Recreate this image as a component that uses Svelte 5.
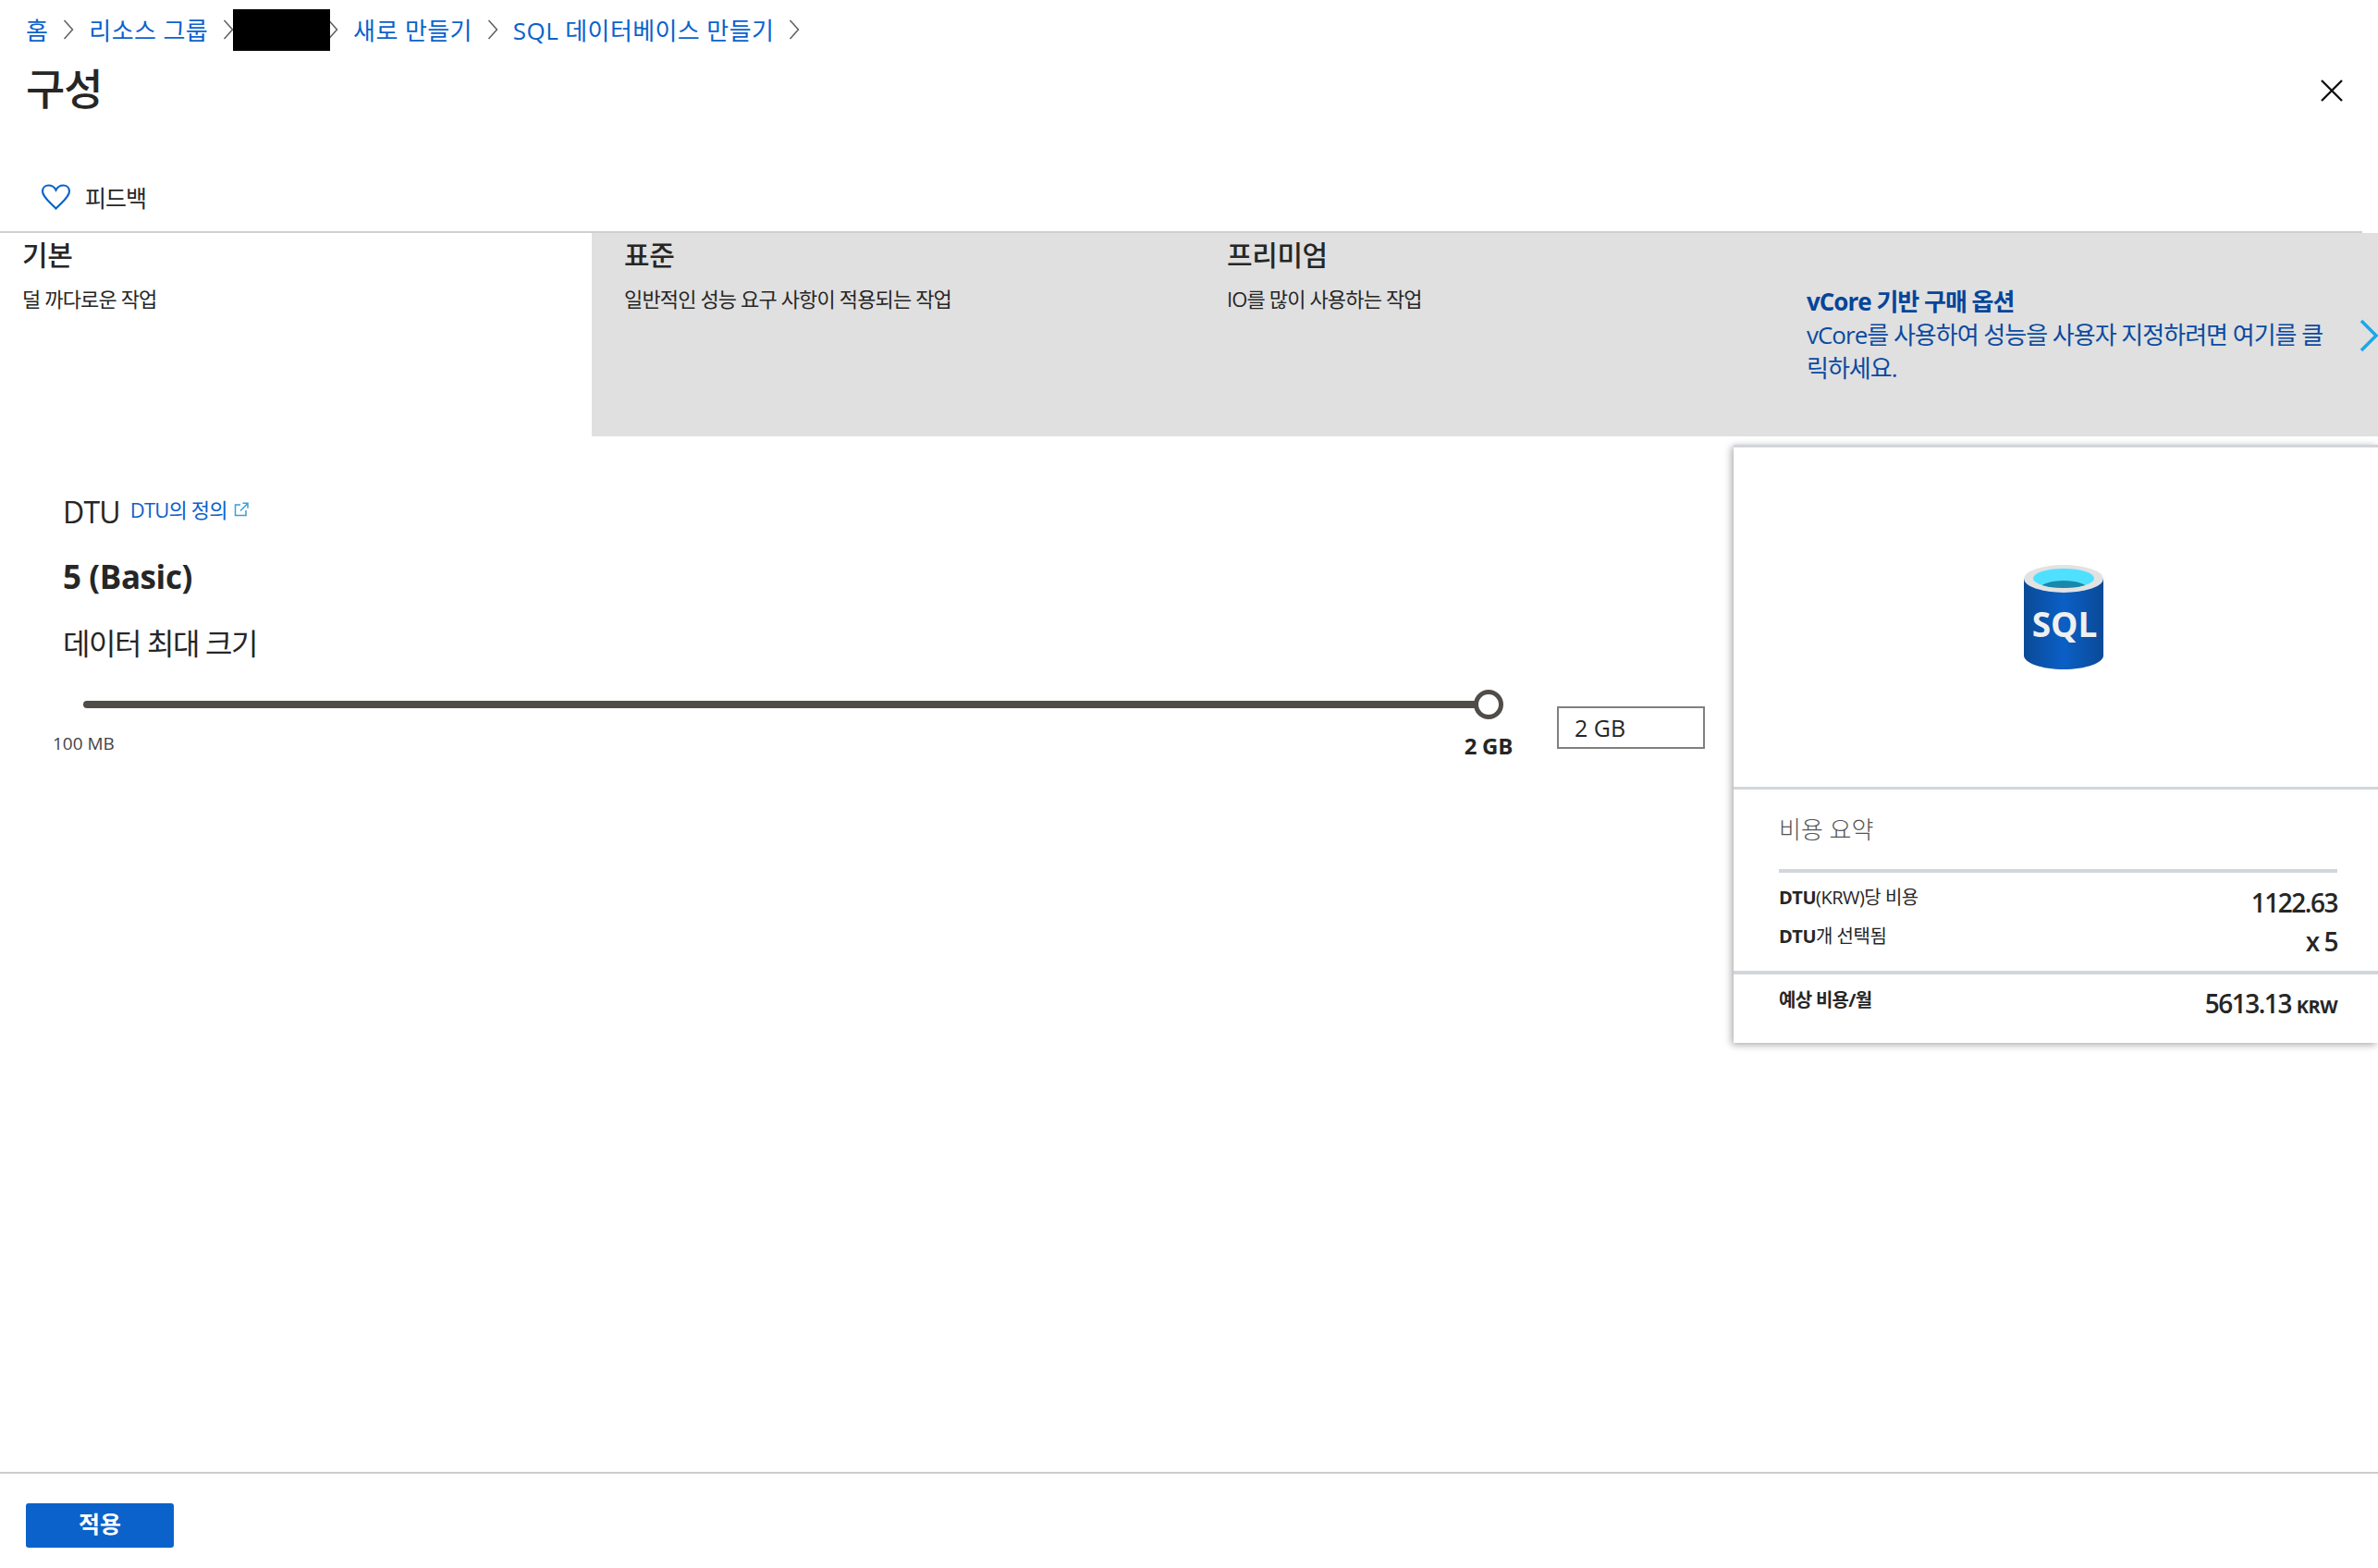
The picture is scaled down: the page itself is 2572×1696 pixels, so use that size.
<script lang="ts">
  const crumbs = ["리소스 그룹"];
  const tiers = [
    { name: "표준", desc: "일반적인 성능 요구 사항이 적용되는 작업" },
    { name: "프리미엄", desc: "IO를 많이 사용하는 작업" },
  ];
  const summary = [
    { label: "DTU", rest: "(KRW)당 비용", value: "1122.63" },
    { label: "DTU", rest: "개 선택됨", value: "x 5" },
  ];
</script>

{#snippet chevron()}
  <svg class="crumb-sep" viewBox="0 0 12 24" aria-hidden="true">
    <path d="M1.5 2 L10.5 12 L1.5 22" />
  </svg>
{/snippet}

<div class="page">
  <nav class="breadcrumb">
    <a href="#home">홈</a>
    {@render chevron()}
    {#each crumbs as crumb}
      <a class="crumb-group" href="#group">{crumb}</a>
    {/each}
    {@render chevron()}
    <span class="redacted"></span>
    <span class="sep-tail">{@render chevron()}</span>
    <a class="crumb-new" href="#new">새로 만들기</a>
    {@render chevron()}
    <a class="crumb-sql" href="#sql">SQL 데이터베이스 만들기</a>
    {@render chevron()}
  </nav>

  <header class="title-row">
    <h1>구성</h1>
    <button class="close" aria-label="닫기">
      <svg viewBox="0 0 24 24"><path d="M1 1 L23 23 M23 1 L1 23" /></svg>
    </button>
  </header>

  <div class="feedback">
    <svg viewBox="0 0 32 28" aria-hidden="true">
      <path d="M16 26.5 C11 21 1.5 14.5 1.5 8 C1.5 4 4.5 1.5 8 1.5 C11.5 1.5 14.5 3.5 16 6.5 C17.5 3.5 20.5 1.5 24 1.5 C27.5 1.5 30.5 4 30.5 8 C30.5 14.5 21 21 16 26.5 Z" />
    </svg>
    <span>피드백</span>
  </div>

  <div class="tabs">
    <div class="tab basic">
      <h2>기본</h2>
      <p>덜 까다로운 작업</p>
    </div>
    <div class="rest">
      {#each tiers as tier}
        <div class="tab">
          <h2>{tier.name}</h2>
          <p>{tier.desc}</p>
        </div>
      {/each}
      <div class="vcore">
        <strong>vCore 기반 구매 옵션</strong>
        <span>vCore를 사용하여 성능을 사용자 지정하려면 여기를 클릭하세요.</span>
      </div>
      <svg class="vcore-arrow" viewBox="0 0 20 36" aria-hidden="true">
        <path d="M2 2 L18 18 L2 34" />
      </svg>
    </div>
  </div>

  <main class="content">
    <section class="config">
      <div class="dtu-row">
        <span class="dtu">DTU</span>
        <a class="dtu-link" href="#dtu">DTU의 정의</a>
        <svg class="ext" viewBox="0 0 16 16" aria-hidden="true">
          <path d="M7 3 H1.5 V14.5 H13 V9" />
          <path d="M7 9.5 L15 1.5 M9.5 1.2 H15 V6.8" />
        </svg>
      </div>
      <div class="dtu-value">5 (Basic)</div>
      <div class="size-label">데이터 최대 크기</div>

      <div class="slider-row">
        <div class="slider">
          <div class="track">
            <div class="thumb"></div>
          </div>
          <div class="ticks">
            <span class="min">100 MB</span>
            <span class="max">2 GB</span>
          </div>
        </div>
        <input class="size-input" value="2 GB" />
      </div>
    </section>

    <aside class="card">
      <div class="card-top">
        <svg class="sql-icon" viewBox="0 0 86 113" aria-hidden="true">
          <defs>
            <linearGradient id="body" x1="0" x2="1" y1="0" y2="0">
              <stop offset="0" stop-color="#0a4a97" />
              <stop offset="0.5" stop-color="#0b5fc6" />
              <stop offset="1" stop-color="#0a4a97" />
            </linearGradient>
            <clipPath id="well"><ellipse cx="43" cy="14.5" rx="33" ry="10.5" /></clipPath>
          </defs>
          <path d="M0 15 V98 C0 106 19 113 43 113 C67 113 86 106 86 98 V15 Z" fill="url(#body)" />
          <ellipse cx="43" cy="15" rx="43" ry="15" fill="#e2e2e2" />
          <ellipse cx="43" cy="14.5" rx="33" ry="10.5" fill="#50e0ff" />
          <ellipse cx="43" cy="26" rx="26" ry="9" fill="#1a87ad" clip-path="url(#well)" />
          <text x="44" y="78" text-anchor="middle" class="sql-text">SQL</text>
        </svg>
      </div>
      <div class="card-body">
        <h3>비용 요약</h3>
        <div class="rows">
          {#each summary as row}
            <div class="row">
              <span class="row-label"><b>{row.label}</b>{row.rest}</span>
              <span class="row-value">{row.value}</span>
            </div>
          {/each}
        </div>
      </div>
      <div class="total">
        <b>예상 비용/월</b>
        <span class="total-value">5613.13 <small>KRW</small></span>
      </div>
    </aside>
  </main>

  <footer class="footer">
    <button class="apply">적용</button>
  </footer>
</div>

<style>
  :global(body) {
    margin: 0;
    background: #fff;
  }

  .page {
    display: flex;
    flex-direction: column;
    height: 1696px;
    overflow: hidden;
    color: #262626;
    font-family: "Open Sans", "Noto Sans CJK KR", sans-serif;
  }

  /* Breadcrumb */
  .breadcrumb {
    display: flex;
    align-items: center;
    height: 46px;
    margin-top: 9px;
    padding-left: 28px;
    font-size: 26px;
  }

  .breadcrumb a {
    color: #0b62cb;
    text-decoration: none;
    white-space: nowrap;
    letter-spacing: 0.4px;
  }

  .crumb-sep {
    width: 12px;
    height: 24px;
    margin: 0 16px;
    flex: none;
    fill: none;
    stroke: #605e5c;
    stroke-width: 1.5;
  }

  .redacted {
    width: 105px;
    height: 45px;
    margin-left: -17px;
    background: #000;
    flex: none;
  }

  .sep-tail {
    display: flex;
    width: 9px;
    overflow: hidden;
    margin-right: 16px;
  }

  .sep-tail .crumb-sep {
    margin: 0 0 0 -3px;
  }

  /* Title */
  .title-row {
    display: flex;
    align-items: center;
    justify-content: space-between;
    height: 60px;
    padding: 16px 38px 0 28px;
    box-sizing: border-box;
  }

  h1 {
    margin: 0;
    font-size: 46px;
    font-weight: 500;
    letter-spacing: -1px;
  }

  .close {
    width: 24px;
    height: 24px;
    margin-top: 10px;
    padding: 0;
    border: none;
    background: none;
  }

  .close svg {
    display: block;
    fill: none;
    stroke: #111;
    stroke-width: 2.4;
  }

  /* Feedback */
  .feedback {
    display: flex;
    align-items: center;
    gap: 15px;
    height: 34px;
    margin-top: 81px;
    padding-left: 44px;
    font-size: 25px;
    letter-spacing: -1px;
  }

  .feedback svg {
    width: 33px;
    height: 28px;
    fill: none;
    stroke: #0b62cb;
    stroke-width: 2.2;
  }

  /* Tabs */
  .tabs {
    display: flex;
    height: 220px;
    margin-top: 20px;
    border-top: 2px solid #cfcfcf;
    margin-right: 17px;
  }

  .tab {
    width: 652px;
    padding: 3px 0 0 0;
    box-sizing: border-box;
  }

  .tab h2 {
    margin: 0;
    font-size: 30px;
    font-weight: 500;
    line-height: 42px;
    letter-spacing: -0.4px;
  }

  .tab p {
    margin: 11px 0 0;
    font-size: 22px;
    line-height: 30px;
    letter-spacing: -0.85px;
  }

  .tab.basic {
    width: 640px;
    padding-left: 24px;
  }

  .rest {
    display: flex;
    flex: 1;
    position: relative;
    margin-right: -17px;
    padding-left: 35px;
    background: #e0e0e0;
  }

  .vcore {
    display: flex;
    flex-direction: column;
    width: 570px;
    padding-top: 56px;
    margin-left: -25px;
    color: #0a4aa0;
    font-size: 26px;
    line-height: 36px;
    letter-spacing: -1px;
  }

  .vcore strong {
    font-weight: 700;
    color: #064599;
  }

  .vcore-arrow {
    position: absolute;
    right: 0;
    top: 93px;
    width: 20px;
    height: 36px;
    fill: none;
    stroke: #1aa7ec;
    stroke-width: 3.5;
  }

  /* Main area */
  .content {
    display: flex;
    flex: 1;
    min-height: 0;
    align-items: flex-start;
  }

  .config {
    flex: 1;
    padding: 59px 0 0 68px;
  }

  .dtu-row {
    display: flex;
    align-items: center;
    height: 44px;
  }

  .dtu {
    font-size: 32px;
    letter-spacing: -0.8px;
  }

  .dtu-link {
    margin-left: 11px;
    color: #0b62cb;
    font-size: 22px;
    text-decoration: none;
    letter-spacing: -0.8px;
    position: relative;
    top: -3px;
  }

  .ext {
    width: 16px;
    height: 16px;
    margin: 0 0 0 7px;
    position: relative;
    top: -2px;
    fill: none;
    stroke: #3a9fd8;
    stroke-width: 1.5;
  }

  .dtu-value {
    margin-top: 26px;
    font-size: 35px;
    font-weight: 700;
    line-height: 46px;
    letter-spacing: -0.4px;
  }

  .size-label {
    margin-top: 27px;
    font-size: 32px;
    line-height: 44px;
    letter-spacing: -1.4px;
  }

  .slider-row {
    display: flex;
    margin-top: 40px;
  }

  .slider {
    width: 1616px;
    margin-left: -68px;
  }

  .track {
    position: relative;
    height: 8px;
    margin-left: 90px;
    margin-right: 5px;
    border-radius: 4px;
    background: #504c48;
  }

  .thumb {
    position: absolute;
    right: -15px;
    top: -12px;
    width: 32px;
    height: 32px;
    box-sizing: border-box;
    border: 5px solid #504c48;
    border-radius: 50%;
    background: #fff;
  }

  .ticks {
    display: flex;
    justify-content: space-between;
    margin-top: 23px;
    padding-left: 57px;
  }

  .min {
    font-size: 19px;
    line-height: 30px;
    color: #444;
  }

  .max {
    font-size: 24px;
    line-height: 36px;
    font-weight: 700;
    margin-right: -20px;
    letter-spacing: -0.3px;
  }

  .size-input {
    width: 160px;
    height: 46px;
    margin: 6px 0 0 68px;
    padding: 0 0 0 17px;
    box-sizing: border-box;
    border: 2px solid #808080;
    color: #262626;
    background: #fff;
    font: 25px "Open Sans", "Noto Sans CJK KR", sans-serif;
  }

  /* Cost card */
  .card {
    flex: none;
    width: 697px;
    height: 647px;
    margin-top: 9px;
    border-top: 3px solid #d2d6db;
    box-sizing: border-box;
    background: #fff;
    box-shadow: -2px 2px 8px rgba(0, 0, 0, 0.35);
  }

  .card-top {
    display: flex;
    justify-content: center;
    height: 370px;
    padding-top: 127px;
    padding-left: 16px;
    box-sizing: border-box;
    border-bottom: 3px solid #d2d6db;
  }

  .sql-icon {
    width: 86px;
    height: 113px;
  }

  .sql-text {
    fill: #f0f0f0;
    font-family: "Open Sans", sans-serif;
    font-size: 37px;
    font-weight: 700;
  }

  .card-body {
    height: 200px;
    padding: 0 44px 0 49px;
    box-sizing: border-box;
    border-bottom: 4px solid #d2d6db;
  }

  h3 {
    margin: 0;
    height: 90px;
    padding-top: 25px;
    box-sizing: border-box;
    border-bottom: 4px solid #d2d6db;
    color: #555;
    font-size: 26px;
    font-weight: 300;
    line-height: 36px;
  }

  .row {
    display: flex;
    justify-content: space-between;
    height: 42px;
  }

  .rows {
    padding-top: 12px;
  }

  .row-label {
    font-size: 20px;
    line-height: 30px;
    letter-spacing: -0.5px;
  }

  .row-value {
    font-size: 28px;
    line-height: 40px;
    font-weight: 600;
    letter-spacing: -1.5px;
  }

  .total {
    display: flex;
    justify-content: space-between;
    padding: 10px 44px 0 49px;
    font-size: 20px;
    letter-spacing: -0.7px;
  }

  .total b {
    line-height: 36px;
  }

  .total-value {
    margin-top: 2px;
    font-size: 28px;
    font-weight: 600;
    letter-spacing: -1.5px;
  }

  .total-value small {
    font-size: 20px;
    font-weight: 700;
    letter-spacing: -0.5px;
  }

  /* Footer */
  .footer {
    height: 104px;
    padding: 32px 0 0 28px;
    box-sizing: border-box;
    border-top: 2px solid #ccc;
  }

  .apply {
    width: 160px;
    height: 48px;
    padding: 0 0 6px;
    border: none;
    border-radius: 3px;
    background: #0b62cb;
    color: #fff;
    font: 700 25px "Open Sans", "Noto Sans CJK KR", sans-serif;
  }
</style>
